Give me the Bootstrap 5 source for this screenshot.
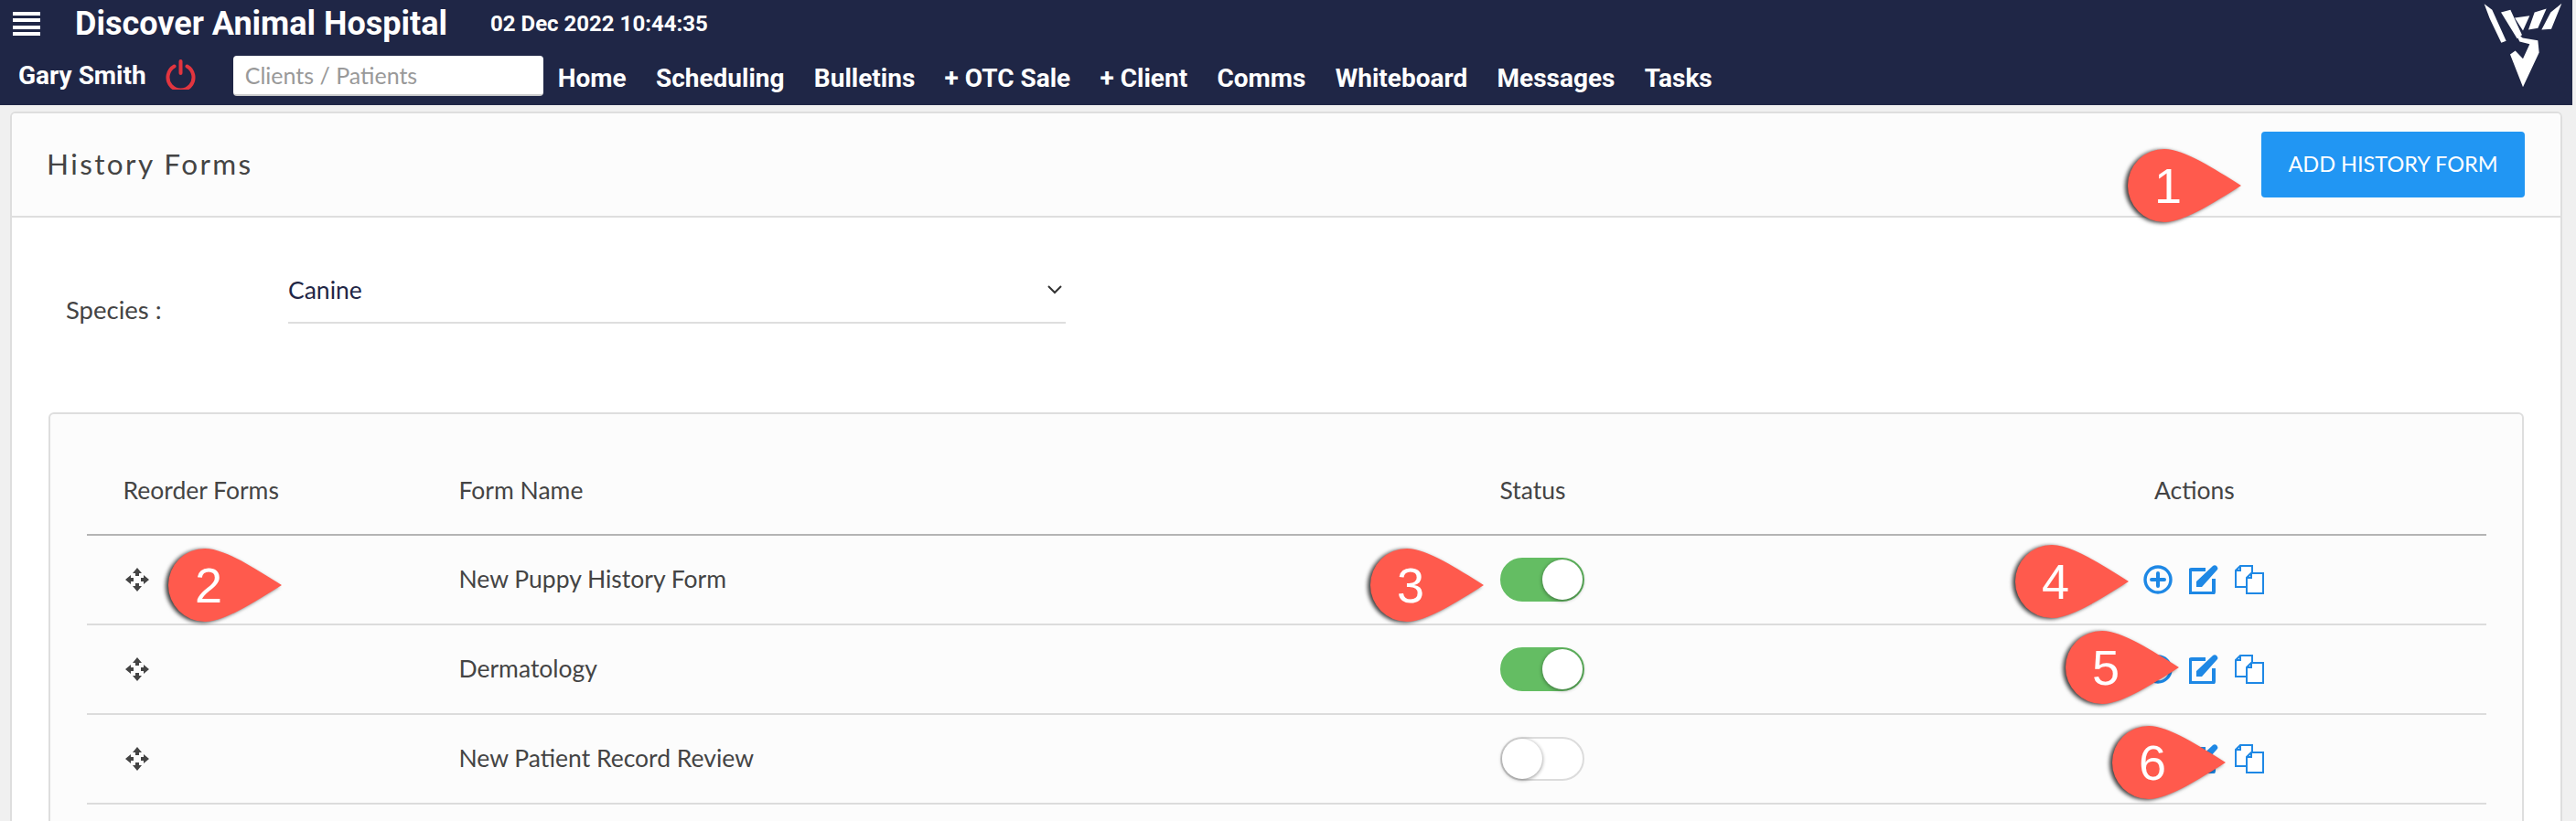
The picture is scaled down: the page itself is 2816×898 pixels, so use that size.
<!DOCTYPE html>
<html lang="en"><head><meta charset="utf-8"><title>History Forms</title>
<link rel="stylesheet" href="https://cdn.jsdelivr.net/npm/bootstrap@5.3.0/dist/css/bootstrap.min.css">
<style>
html,body{height:898px;overflow:hidden}
body{background:#f0f0f0;font-family:"Lato","Liberation Sans",sans-serif;color:#444;padding-right:4px;position:relative}
.topbar{background:#1f2646;height:115px;color:#fff;font-family:Roboto,"Liberation Sans",sans-serif;font-weight:700}
.toprow{height:52px;padding-left:14px}
.subrow{height:63px;padding-left:21px}
.burger{width:30px;height:26px;display:flex;flex-direction:column;justify-content:space-between;margin-right:39px}
.burger i{display:block;height:4px;background:#fff}
.hosp{font-size:36px;margin-right:47px;white-space:nowrap;margin-left:-1px}
.clock{font-size:24px;white-space:nowrap}
.who{font-size:28px;margin-right:21px;position:relative;top:-1px;white-space:nowrap;margin-left:-1px}
.pw{width:33px;height:33px;margin-right:41px;position:relative;top:-2px;flex:none}
.lookup{width:339px;height:44px;background:#fff;border-radius:4px;border:0;border-bottom:2px solid #ccc;padding:0 13px;font-family:"Lato",sans-serif;font-size:25px;font-weight:400;color:#333;margin-right:16px;position:relative;top:-1px;flex:none}
.lookup::placeholder{color:#999}
.menu{gap:32.3px;font-size:28px;white-space:nowrap;position:relative;top:2px}
.menu a{color:#fff;text-decoration:none}
.brandmark{width:90px;height:97px;margin:1px 9px 0 0;flex:none}
.shell{margin:7px 11px 0;height:900px;border:2px solid #dedede;border-radius:6px;background:#fff}
.shell>.card-header{flex:none;height:114px;background:#fcfcfc;border:0;border-bottom:2px solid #dedede;padding:20px 39px 0 38px;border-radius:4px 4px 0 0}
.shell-title{font-size:31.5px;letter-spacing:2.4px;font-weight:400;color:#444;margin:17px 0 0}
.addbtn{width:288px;height:72px;background:#2196f3;border:0;border-radius:4px;color:#fff;font-size:23.5px;padding:0}
.shell>.card-body{padding:0 40px}
.speciesrow{padding-top:61px;height:213px}
.specieslbl{width:262px;padding:22px 0 0 19px;font-size:27.5px;line-height:36px}
.speciesbox{width:850px;height:55px;border-bottom:2px solid #dedede;font-size:26.5px;line-height:36px;color:#1f2646;padding-right:4px}
.chev{margin-top:13px}
.tablebox{border:2px solid #dedede;border-radius:6px;background:#fcfcfc;height:600px;padding:37px 40px 0}
.formtable{margin:0;width:2623px;table-layout:fixed;--bs-table-bg:transparent}
.c1{width:367px}.c2{width:1138px}.c3{width:703px}
.formtable th,.formtable td{font-weight:400;padding:0 0 0 39.5px;vertical-align:middle;font-size:26.5px;color:#444;border-bottom:2px solid #dcdcdc}
.formtable thead th{height:95px;border-bottom:2px solid #b4b4b4}
.formtable td{height:98px}
.formtable .acthead{padding-left:52px}
.drag{width:26px;height:26px;display:block;margin-left:2px}
.tog{width:92px;height:48px;border-radius:24px;display:block;position:relative;border:2px solid #dcdcdc;background:#fff}
.tog i{position:absolute;width:44px;height:44px;border-radius:50%;background:#fff;top:0;left:0;box-shadow:0 1px 4px rgba(0,0,0,.45)}
.tog.is-on{background:#64bd63;border-color:#64bd63}
.tog.is-on i{left:44px}
.acts{gap:18px}
.acts svg{width:32px;height:32px;display:block}
.pin{position:absolute;width:124px;height:80px;color:#fff;font-family:"Liberation Sans",sans-serif;font-size:54px;line-height:80px}
.pin svg{position:absolute;inset:0;width:124px;height:80px;overflow:visible;filter:drop-shadow(-3px 1px 2px rgba(0,0,0,.75))}
.pin span{position:absolute;left:0;top:0;width:88px;text-align:center}
.p1{left:2326px;top:163px}.p2{left:184px;top:600px}.p3{left:1498px;top:600px}
.p4{left:2203px;top:596px}.p5{left:2258px;top:690px}.p6{left:2309px;top:794px}
</style></head>
<body>
<header class="topbar d-flex justify-content-between">
 <div class="flex-grow-1">
  <div class="toprow d-flex align-items-center">
   <div class="burger"><i></i><i></i><i></i><i></i></div>
   <div class="hosp">Discover Animal Hospital</div>
   <div class="clock">02 Dec 2022 10:44:35</div>
  </div>
  <div class="subrow d-flex align-items-center">
   <div class="who">Gary Smith</div>
   <svg class="pw" viewBox="0 0 33 33" fill="none" stroke="#e2353f" stroke-width="4" stroke-linecap="round"><path d="M9.5 7.5a14 14 0 1 0 14 0"/><path d="M16.5 2v13"/></svg>
   <input class="lookup" placeholder="Clients / Patients">
   <nav class="menu d-flex"><a href="#">Home</a><a href="#">Scheduling</a><a href="#">Bulletins</a><a href="#">+ OTC Sale</a><a href="#">+ Client</a><a href="#">Comms</a><a href="#">Whiteboard</a><a href="#">Messages</a><a href="#">Tasks</a></nav>
  </div>
 </div>
 <svg class="brandmark" viewBox="40 5 270 290" fill="#fff"><path d="M48 14L74 34 120 136 104 142 66 62zM103 42L134 34 172 116 156 128zM148 60L197 53 175 102zM213 42L252 30 224 94 193 99zM302 13L268 97 236 99 266 42zM148 104L174 126 224 134 228 174 175 287 133 180 150 168 175 194 197 146 164 138z"/></svg>
</header>
<main class="card shell">
 <div class="card-header d-flex justify-content-between">
  <h1 class="shell-title">History Forms</h1>
  <button class="btn addbtn align-self-start">ADD HISTORY FORM</button>
 </div>
 <div class="card-body">
  <div class="speciesrow d-flex">
   <div class="specieslbl">Species :</div>
   <div class="speciesbox d-flex justify-content-between"><span>Canine</span>
    <svg width="16" height="10" viewBox="0 0 16 10" fill="none" stroke="#333" stroke-width="2" class="chev"><path d="M1 1l7 7 7-7"/></svg></div>
  </div>
  <div class="tablebox">
   <table class="table formtable">
    <colgroup><col class="c1"><col class="c2"><col class="c3"><col></colgroup>
    <thead><tr><th>Reorder Forms</th><th>Form Name</th><th>Status</th><th class="acthead">Actions</th></tr></thead>
    <tbody>
     <tr><td><svg class="drag"><use href="#mv"/></svg></td><td>New Puppy History Form</td><td><span class="tog is-on"><i></i></span></td><td><div class="acts d-flex"><svg><use href="#plus"/></svg><svg><use href="#edit"/></svg><svg><use href="#copy"/></svg></div></td></tr>
     <tr><td><svg class="drag"><use href="#mv"/></svg></td><td>Dermatology</td><td><span class="tog is-on"><i></i></span></td><td><div class="acts d-flex"><svg><use href="#plus"/></svg><svg><use href="#edit"/></svg><svg><use href="#copy"/></svg></div></td></tr>
     <tr><td><svg class="drag"><use href="#mv"/></svg></td><td>New Patient Record Review</td><td><span class="tog"><i></i></span></td><td><div class="acts d-flex"><svg><use href="#plus"/></svg><svg><use href="#edit"/></svg><svg><use href="#copy"/></svg></div></td></tr>
    </tbody>
   </table>
  </div>
 </div>
</main>
<svg width="0" height="0" class="position-absolute">
 <symbol id="plus" viewBox="0 0 32 32"><circle cx="16" cy="16" r="14" fill="none" stroke="#1e88e5" stroke-width="3.4"/><path d="M16 9v14M9 16h14" stroke="#1e88e5" stroke-width="4" stroke-linecap="round"/></symbol>
 <symbol id="edit" viewBox="0 0 32 32"><path d="M18 5H3a2 2 0 0 0-2 2v22a2 2 0 0 0 2 2h22a2 2 0 0 0 2-2V15" fill="none" stroke="#1e88e5" stroke-width="4"/><path d="M8 24v-6L26 1c1-1 3-1 4 0s2 3 1 4L14 24z" fill="#1e88e5"/></symbol>
 <symbol id="copy" viewBox="0 0 32 32"><path d="M6 1h13v23H1V6zM6 1v5H1" fill="#fff" stroke="#1e88e5" stroke-width="2"/><path d="M18 9h13v22H13V14zM18 9v5h-5" fill="#fff" stroke="#1e88e5" stroke-width="2"/></symbol>
 <symbol id="mv" viewBox="0 0 26 26"><g fill="#444"><path d="M13 0l5 6h-3v3h-4V6H8z"/><path d="M13 26l-5-6h3v-3h4v3h3z"/><path d="M0 13l6-5v3h3v4H6v3z"/><path d="M26 13l-6 5v-3h-3v-4h3V8z"/></g></symbol>
 <symbol id="tear" viewBox="0 0 124 80"><path d="M40 0C62 0 95 22 124 40 95 58 62 80 40 80A40 40 0 0 1 40 0z" fill="#ff5a4d"/></symbol>
</svg>
<div class="pin p1"><svg><use href="#tear"/></svg><span>1</span></div>
<div class="pin p2"><svg><use href="#tear"/></svg><span>2</span></div>
<div class="pin p3"><svg><use href="#tear"/></svg><span>3</span></div>
<div class="pin p4"><svg><use href="#tear"/></svg><span>4</span></div>
<div class="pin p5"><svg><use href="#tear"/></svg><span>5</span></div>
<div class="pin p6"><svg><use href="#tear"/></svg><span>6</span></div>
<script src="https://cdn.jsdelivr.net/npm/bootstrap@5.3.0/dist/js/bootstrap.bundle.min.js"></script>
</body></html>
